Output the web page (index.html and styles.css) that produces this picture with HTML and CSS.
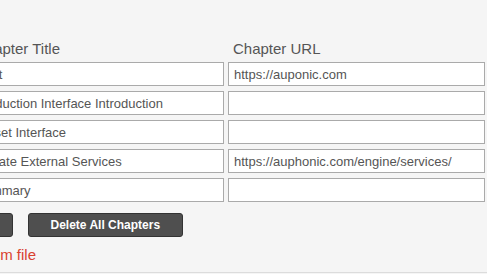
FILE: index.html
```html
<!DOCTYPE html>
<html lang="en">
<head>
<meta charset="utf-8">
<title>Chapters</title>
<link rel="stylesheet" href="styles.css">
</head>
<body>
<div class="page">
  <div class="chapters">
    <div class="label label-title">Chapter Title</div>
    <div class="label">Chapter URL</div>
    <input class="field" type="text" value="Start">
    <input class="field" type="text" value="https://auponic.com">
    <input class="field" type="text" value="Production Interface Introduction">
    <input class="field" type="text" value="">
    <input class="field" type="text" value="Closet Interface">
    <input class="field" type="text" value="">
    <input class="field" type="text" value="Update External Services">
    <input class="field" type="text" value="https://auphonic.com/engine/services/">
    <input class="field" type="text" value="Summary">
    <input class="field" type="text" value="">
  </div>
  <div class="actions">
    <button class="btn" type="button">Add Chapter</button>
    <button class="btn" type="button">Delete All Chapters</button>
  </div>
  <a class="import" href="#">Import from file</a>
</div>
</body>
</html>
```

FILE: styles.css
```css
html, body {
  margin: 0;
  padding: 0;
  background: #f5f5f5;
  overflow: hidden;
}
body {
  font-family: "Liberation Sans", Arial, sans-serif;
  color: #555;
}
.page {
  margin-left: -104px;
  width: 592px;
  padding-top: 40px;
  padding-bottom: 9px;
  border-bottom: 1px solid #dcdcdc;
}
.chapters {
  display: grid;
  grid-template-columns: 255px 257px;
  column-gap: 4px;
  row-gap: 5px;
  padding-left: 73px;
}
.label {
  font-size: 15px;
  line-height: 17px;
  padding-left: 5px;
  color: #555;
}
.label-title {
  padding-left: 6px;
}
.field {
  box-sizing: border-box;
  height: 24px;
  margin: 0;
  border: 1px solid #aaa;
  background: #fff;
  padding: 0 5px;
  font-family: "Liberation Sans", Arial, sans-serif;
  font-size: 13px;
  color: #555;
  outline: none;
}
.actions {
  display: flex;
  gap: 15px;
  margin-top: 11px;
}
.btn {
  box-sizing: border-box;
  height: 24px;
  padding: 0 21.5px;
  border: 1px solid #333;
  border-radius: 3px;
  background: #4f4f4f;
  color: #fff;
  font-family: "Liberation Sans", Arial, sans-serif;
  font-size: 12px;
  font-weight: bold;
}
.import {
  display: block;
  margin-top: 9px;
  padding-left: 40px;
  font-size: 15px;
  line-height: 17px;
  color: #d9412f;
  text-decoration: none;
}
```
